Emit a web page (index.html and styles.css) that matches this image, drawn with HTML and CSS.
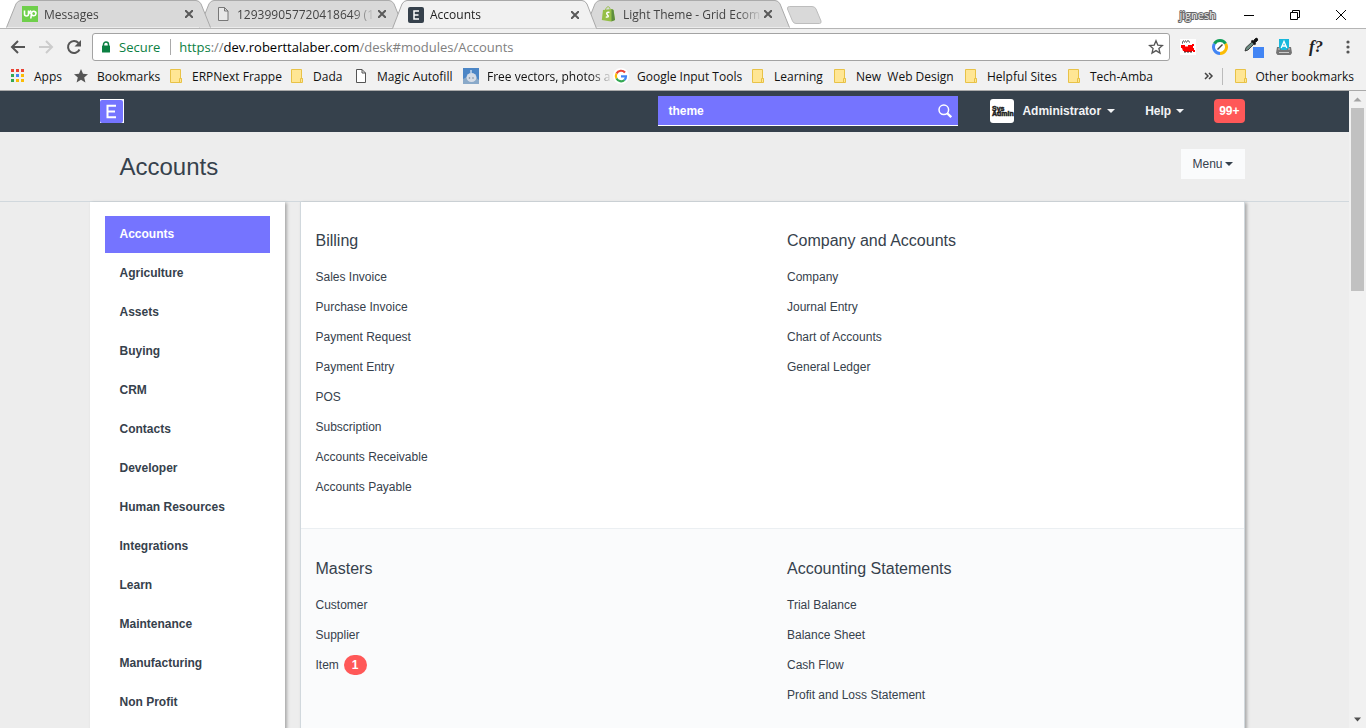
FILE: index.html
```html
<!DOCTYPE html>
<html lang="en">
<head>
<meta charset="utf-8">
<title>Accounts</title>
<link rel="stylesheet" href="styles.css">
</head>
<body>
<div class="tabstrip">
  <div class="tabs">
    <div class="tab tab-first">
      <svg class="tab-shape" viewBox="0 0 205 29" preserveAspectRatio="none"><path d="M0.500 28.500L10 4Q12 .5 15 .5H190Q193 .5 195 4L204.500 28.500"/></svg>
      <svg class="favicon" viewBox="0 0 16 16"><rect width="16" height="16" fill="#6fcf4b"/><path d="M2.500 4.500v3.500a2 2 0 0 0 4 0v-3.500M6.500 8L9 4.500M8.800 12.500l.8-5.500a2.200 2.200 0 1 1 2 2.700q-2 0-3-3" fill="none" stroke="#fff" stroke-width="1.600"/></svg>
      <span class="tab-title">Messages</span>
      <button class="tab-close" aria-label="Close Messages"><svg viewBox="0 0 8 8"><path d="M0 0L8 8M8 0L0 8"/></svg></button>
    </div>
    <div class="tab">
      <svg class="tab-shape" viewBox="0 0 205 29" preserveAspectRatio="none"><path d="M0.500 28.500L10 4Q12 .5 15 .5H190Q193 .5 195 4L204.500 28.500"/></svg>
      <svg class="favicon" viewBox="0 0 16 16"><path d="M3.500 1.500h6l3.500 3.500v9.500h-9.500zM9.500 1.500V5H13" fill="#e8e8e8" stroke="#777"/></svg>
      <span class="tab-title">129399057720418649 (1</span>
      <button class="tab-close" aria-label="Close document"><svg viewBox="0 0 8 8"><path d="M0 0L8 8M8 0L0 8"/></svg></button>
    </div>
    <div class="tab tab-active">
      <svg class="tab-shape" viewBox="0 0 205 29" preserveAspectRatio="none"><path d="M0.500 28.500L10 4Q12 .5 15 .5H190Q193 .5 195 4L204.500 28.500"/></svg>
      <svg class="favicon" viewBox="0 0 16 16"><rect width="16" height="16" rx="2" fill="#36414c"/><path d="M11 4H6v8h5M6 8h4.500" fill="none" stroke="#fff" stroke-width="1.500"/></svg>
      <span class="tab-title">Accounts</span>
      <button class="tab-close" aria-label="Close Accounts"><svg viewBox="0 0 8 8"><path d="M0 0L8 8M8 0L0 8"/></svg></button>
    </div>
    <div class="tab">
      <svg class="tab-shape" viewBox="0 0 205 29" preserveAspectRatio="none"><path d="M0.500 28.500L10 4Q12 .5 15 .5H190Q193 .5 195 4L204.500 28.500"/></svg>
      <svg class="favicon" viewBox="0 0 16 16"><path d="M2 4l9-1 1.500 1L14 14l-4 1.500L.8 14z" fill="#95bf47"/><path d="M10.500 3l2 1L14 14l-3.500 1.500z" fill="#5e8e3e"/><path d="M4.500 4C5 1.500 6.500.5 7.500.8S9 2 9 3.500" fill="none" stroke="#95bf47"/><path d="M8.500 6.500C6 5.500 5 7.500 6.300 8.700S8 11.500 4.800 11" fill="none" stroke="#fff" stroke-width="1.500"/></svg>
      <span class="tab-title">Light Theme - Grid Ecom</span>
      <button class="tab-close" aria-label="Close Light Theme"><svg viewBox="0 0 8 8"><path d="M0 0L8 8M8 0L0 8"/></svg></button>
    </div>
    <button class="new-tab" aria-label="New tab"><svg viewBox="0 0 35 18"><path d="M2.500.5H25q3 0 4 2.500L34 15q.5 2.500-1.500 2.500H9q-2.500 0-3.500-2.500L.5 3q-.5-2.500 2-2.500z" fill="#d9d9d9" stroke="#bdbdbd"/></svg></button>
  </div>
  <div class="window-controls">
    <span class="profile">jignesh</span>
    <button class="win-btn" aria-label="Minimize"><svg viewBox="0 0 12 12"><path d="M1 6.500h10"/></svg></button>
    <button class="win-btn" aria-label="Restore"><svg viewBox="0 0 12 12"><path d="M1.500 3.500h7v7h-7zM3.500 3.500v-2h7v7h-2"/></svg></button>
    <button class="win-btn" aria-label="Close window"><svg viewBox="0 0 12 12"><path d="M1 1l10 10M11 1L1 11"/></svg></button>
  </div>
</div>

<div class="toolbar">
  <button class="tool" aria-label="Back"><svg viewBox="0 0 16 16"><path d="M15 8H2M8 2L2 8l6 6" fill="none" stroke="#555" stroke-width="2"/></svg></button>
  <button class="tool" aria-label="Forward"><svg viewBox="0 0 16 16"><path d="M1 8h13M8 2l6 6-6 6" fill="none" stroke="#ccc" stroke-width="2"/></svg></button>
  <button class="tool" aria-label="Reload"><svg viewBox="0 0 16 16"><path d="M13.500 10.500A6 6 0 1 1 12.500 4" fill="none" stroke="#555" stroke-width="2"/><path d="M15 1v6.500H8.500z" fill="#555"/></svg></button>
  <div class="address">
    <svg class="lock" viewBox="0 0 10 12"><path d="M2.500 5V3.500a2.500 2.500 0 0 1 5 0V5" fill="none" stroke="#0b8043" stroke-width="1.500"/><rect x="1" y="4.500" width="8" height="7" rx=".5" fill="#0b8043"/></svg>
    <span class="secure">Secure</span>
    <span class="url"><span class="url-scheme">https</span><span class="url-rest">://</span>dev.roberttalaber.com<span class="url-rest">/desk#modules/Accounts</span></span>
    <button class="star" aria-label="Bookmark this page"><svg viewBox="0 0 16 16"><path d="M8 1.800l1.800 4.300 4.600.4-3.500 3 1.100 4.600L8 11.600l-4 2.500 1.100-4.600-3.500-3 4.600-.4z" fill="none" stroke="#555" stroke-width="1.300"/></svg></button>
  </div>
  <div class="extensions">
    <button class="ext" aria-label="Train"><svg viewBox="0 0 16 16"><rect width="16" height="16" fill="#fff"/><path d="M1 6h4v1.500h3V6h4V5h2v2h-1v2h1v2h1v2h-2v-1h-1v1H4v-1H3l-1-3H1z" fill="#f00"/><path d="M3 2h1M5 2h1M7 2h2M2 3h1M4 3h1M6 3h1M9 3h1M2 4h1M4 13h2M7 13h2M10 13h2" stroke="#333"/></svg></button>
    <button class="ext" aria-label="Compass"><svg viewBox="0 0 16 16"><circle cx="8" cy="8" r="6.500" fill="#fff"/><g fill="none" stroke-width="3"><path d="M2.400 4.800A6.500 6.500 0 0 1 13.600 4.800" stroke="#0f9d58"/><path d="M13.600 4.800A6.500 6.500 0 0 1 8 14.500" stroke="#fbbc05"/><path d="M8 14.500A6.500 6.500 0 0 1 2.400 4.800" stroke="#4285f4"/></g><path d="M5.500 10.500l5-5" stroke="#444" stroke-width="1.500"/></svg></button>
    <button class="ext ext-wide" aria-label="Colour picker"><svg viewBox="0 0 20 22"><path d="M1 15l1-3.500 6.500-6 2 2-6.500 6.500z" fill="#6c8c83" stroke="#222" stroke-width=".8"/><path d="M7.500 4.500l4 4" stroke="#111" stroke-width="1.800"/><path d="M9 5.500l2.500-3q1.500-1 2 .5t-.5 2L10.500 7z" fill="#111" stroke="#111"/><rect x="9" y="11" width="11" height="11" fill="#4285f4"/></svg></button>
    <button class="ext" aria-label="Autofill"><svg viewBox="0 0 16 16"><path d="M1 8h14l1 6-1.500 2h-13L0 14z" fill="#757575"/><path d="M2 10h2M12 10h2M3 13.500h10" stroke="#ccc"/><path d="M3 0h10v8.500l-2.500 2.500h-5L3 8.500z" fill="#18b8dc"/><path d="M5.200 9L8 2.500 10.800 9M6 7h4" fill="none" stroke="#fff" stroke-width="1.300"/></svg></button>
    <button class="ext ext-font" aria-label="What font">f?</button>
    <button class="ext" aria-label="Browser menu"><svg viewBox="0 0 16 16" fill="#555"><circle cx="8" cy="3" r="1.600"/><circle cx="8" cy="8" r="1.600"/><circle cx="8" cy="13" r="1.600"/></svg></button>
  </div>
</div>

<nav class="bookmarks" aria-label="Bookmarks">
  <a class="bm w-apps" href="#"><svg viewBox="0 0 14 14"><path d="M0 0h3v3H0zM5 0h3v3H5zM10 0h3v3h-3z" fill="#ea4335"/><path d="M0 5h3v3H0z" fill="#34a853"/><path d="M5 5h3v3H5z" fill="#4285f4"/><path d="M10 5h3v3h-3zM5 10h3v3H5zM10 10h3v3h-3z" fill="#fbbc05"/><path d="M0 10h3v3H0z" fill="#34a853"/></svg><span>Apps</span></a>
  <a class="bm w-book" href="#"><svg viewBox="0 0 14 14"><path d="M7 0l2 4.700 5 .5-3.800 3.300 1.200 5L7 10.800l-4.400 2.700 1.200-5L0 5.200l5-.5z" fill="#555"/></svg><span>Bookmarks</span></a>
  <a class="bm w-erp" href="#"><svg viewBox="0 0 14 14"><path d="M1.500.5h10v9h1v4h-11z" fill="#ffe694" stroke="#e8c247"/><path d="M10.500 13v-3.500h2" fill="none" stroke="#e8c247"/></svg><span>ERPNext Frappe</span></a>
  <a class="bm w-dada" href="#"><svg viewBox="0 0 14 14"><path d="M1.500.5h10v9h1v4h-11z" fill="#ffe694" stroke="#e8c247"/><path d="M10.500 13v-3.500h2" fill="none" stroke="#e8c247"/></svg><span>Dada</span></a>
  <a class="bm w-magic" href="#"><svg viewBox="0 0 14 14"><path d="M2.500.5h5.500l3.500 3.500v9.500h-9zM8 .5V4h3.500" fill="#fff" stroke="#555"/></svg><span>Magic Autofill</span></a>
  <a class="bm w-free" href="#"><svg viewBox="0 0 16 16"><rect width="16" height="16" fill="#4c86c6"/><path d="M0 11l4-2 3 1 4-2 5 4v4H0z" fill="#89a9c9"/><path d="M8 2v3" stroke="#fff"/><ellipse cx="8.500" cy="9.500" rx="5" ry="4.500" fill="#d5dce6"/><circle cx="6.500" cy="10" r=".8" fill="#789"/><circle cx="10" cy="10" r=".8" fill="#789"/></svg><span class="fade">Free vectors, photos a</span></a>
  <a class="bm w-google" href="#"><svg viewBox="0 0 16 16"><circle cx="8" cy="8" r="8" fill="#fff"/><g fill="none" stroke-width="2.200"><path d="M12 4.500A5.200 5.200 0 0 0 3.500 5.500" stroke="#ea4335"/><path d="M3.500 5.500a5.200 5.200 0 0 0 0 5" stroke="#fbbc05"/><path d="M3.500 10.500a5.200 5.200 0 0 0 8 1.500" stroke="#34a853"/><path d="M11.500 12A5 5 0 0 0 13 8.300H8" stroke="#4285f4"/></g></svg><span>Google Input Tools</span></a>
  <a class="bm w-learn" href="#"><svg viewBox="0 0 14 14"><path d="M1.500.5h10v9h1v4h-11z" fill="#ffe694" stroke="#e8c247"/><path d="M10.500 13v-3.500h2" fill="none" stroke="#e8c247"/></svg><span>Learning</span></a>
  <a class="bm w-web" href="#"><svg viewBox="0 0 14 14"><path d="M1.500.5h10v9h1v4h-11z" fill="#ffe694" stroke="#e8c247"/><path d="M10.500 13v-3.500h2" fill="none" stroke="#e8c247"/></svg><span>New&nbsp; Web Design</span></a>
  <a class="bm w-help" href="#"><svg viewBox="0 0 14 14"><path d="M1.500.5h10v9h1v4h-11z" fill="#ffe694" stroke="#e8c247"/><path d="M10.500 13v-3.500h2" fill="none" stroke="#e8c247"/></svg><span>Helpful Sites</span></a>
  <a class="bm" href="#"><svg viewBox="0 0 14 14"><path d="M1.500.5h10v9h1v4h-11z" fill="#ffe694" stroke="#e8c247"/><path d="M10.500 13v-3.500h2" fill="none" stroke="#e8c247"/></svg><span>Tech-Amba</span></a>
  <button class="more" aria-label="More bookmarks"><svg viewBox="0 0 10 8"><path d="M1 1l3 3-3 3M5 1l3 3-3 3" fill="none" stroke="#444" stroke-width="1.500"/></svg></button>
  <a class="bm other" href="#"><svg viewBox="0 0 14 14"><path d="M1.500.5h10v9h1v4h-11z" fill="#ffe694" stroke="#e8c247"/><path d="M10.500 13v-3.500h2" fill="none" stroke="#e8c247"/></svg><span>Other bookmarks</span></a>
</nav>

<div class="viewport">
  <div class="page">
    <header class="navbar">
      <div class="container navbar-row">
        <a class="brand" href="#" aria-label="Home"><svg viewBox="0 0 24 24"><rect width="24" height="24" fill="#fff"/><rect y="1" width="23" height="23" rx="2" fill="#7574ff"/><path d="M16 6.800H7.500v11.400H16M7.500 12.500h7.500" fill="none" stroke="#fff" stroke-width="2"/></svg></a>
        <form class="search">
          <input type="text" value="theme" aria-label="Search">
          <svg viewBox="0 0 14 14"><circle cx="5.800" cy="5.800" r="4.800" fill="none" stroke="#fff" stroke-width="1.500"/><path d="M9.200 9.200l4 4" stroke="#fff" stroke-width="2.300"/></svg>
        </form>
        <button class="nav-item user"><svg class="avatar" viewBox="0 0 24 24"><rect width="24" height="24" rx="3" fill="#fff"/><text x="2" y="12" class="avatar-text">Sys</text><text x="2" y="17" class="avatar-text">Admin</text></svg>Administrator<span class="caret"></span></button>
        <button class="nav-item help">Help<span class="caret"></span></button>
        <button class="notifications">99+</button>
      </div>
    </header>
    <div class="page-head">
      <div class="container head-row">
        <h1>Accounts</h1>
        <button class="menu-btn">Menu<span class="caret"></span></button>
      </div>
    </div>
    <div class="container body-row">
      <aside class="sidebar">
        <a class="side-link current" href="#">Accounts</a>
        <a class="side-link" href="#">Agriculture</a>
        <a class="side-link" href="#">Assets</a>
        <a class="side-link" href="#">Buying</a>
        <a class="side-link" href="#">CRM</a>
        <a class="side-link" href="#">Contacts</a>
        <a class="side-link" href="#">Developer</a>
        <a class="side-link" href="#">Human Resources</a>
        <a class="side-link" href="#">Integrations</a>
        <a class="side-link" href="#">Learn</a>
        <a class="side-link" href="#">Maintenance</a>
        <a class="side-link" href="#">Manufacturing</a>
        <a class="side-link" href="#">Non Profit</a>
      </aside>
      <main class="modules">
        <div class="section">
          <section class="group">
            <h2>Billing</h2>
            <a href="#">Sales Invoice</a>
            <a href="#">Purchase Invoice</a>
            <a href="#">Payment Request</a>
            <a href="#">Payment Entry</a>
            <a href="#">POS</a>
            <a href="#">Subscription</a>
            <a href="#">Accounts Receivable</a>
            <a href="#">Accounts Payable</a>
          </section>
          <section class="group">
            <h2>Company and Accounts</h2>
            <a href="#">Company</a>
            <a href="#">Journal Entry</a>
            <a href="#">Chart of Accounts</a>
            <a href="#">General Ledger</a>
          </section>
        </div>
        <div class="section section-alt">
          <section class="group">
            <h2>Masters</h2>
            <a href="#">Customer</a>
            <a href="#">Supplier</a>
            <a href="#">Item<span class="count">1</span></a>
          </section>
          <section class="group">
            <h2>Accounting Statements</h2>
            <a href="#">Trial Balance</a>
            <a href="#">Balance Sheet</a>
            <a href="#">Cash Flow</a>
            <a href="#">Profit and Loss Statement</a>
          </section>
        </div>
      </main>
    </div>
  </div>
  <div class="scrollbar" aria-hidden="true">
    <svg viewBox="0 0 17 17"><path d="M4.500 10.500l4-4 4 4z" fill="#a3a3a3"/></svg>
    <div class="track"><div class="thumb"></div></div>
    <svg viewBox="0 0 17 17"><path d="M5 6.500l3.500 4 3.500-4z" fill="#505050"/></svg>
  </div>
</div>
</body>
</html>
```
FILE: styles.css
```css
* { box-sizing: border-box; }

body {
  margin: 0;
  height: 100vh;
  display: flex;
  flex-direction: column;
  overflow: hidden;
  background: #ededed;
  color: #36414c;
  font-family: "Liberation Sans", Arial, sans-serif;
  font-size: 12px;
}

button {
  margin: 0;
  padding: 0;
  border: 0;
  background: none;
  color: inherit;
  font: inherit;
}

a { color: inherit; text-decoration: none; }
svg { display: block; flex: none; }

.tabstrip, .toolbar, .bookmarks {
  font-family: "Open Sans", "Noto Sans", sans-serif;
  flex: none;
  display: flex;
  align-items: center;
}

/* Tab strip */
.tabstrip {
  height: 29px;
  justify-content: space-between;
  background: linear-gradient(#b5b5b5, #b5b5b5) bottom / 100% 1px no-repeat #fff;
}
.tabs { display: flex; padding-left: 6px; }
.tab {
  position: relative;
  z-index: 0;
  display: flex;
  align-items: center;
  width: 205px;
  height: 29px;
  padding: 0 18px 0 16px;
  margin-right: -12px;
  color: #444;
}
.tab-first { z-index: 1; }
.tab-active { z-index: 2; color: #222; }
.tab-shape {
  position: absolute;
  inset: 0;
  z-index: -1;
  width: 100%;
  height: 100%;
  fill: #d9d9d9;
  stroke: #a8a8a8;
}
.tab:not(.tab-active) { border-bottom: 1px solid #b5b5b5; }
.tab-active .tab-shape { fill: #f1f1f1; }
.favicon { width: 16px; height: 16px; }
.tab-title {
  flex: 1;
  margin: 0 2px 0 6px;
  overflow: hidden;
  white-space: nowrap;
  -webkit-mask-image: linear-gradient(to left, transparent, #000 24px);
  mask-image: linear-gradient(to left, transparent, #000 24px);
}
.tab-close svg { width: 8px; height: 8px; stroke: #5a5a5a; stroke-width: 2; }
.new-tab { margin: 0 0 0 9px; }
.new-tab svg { width: 35px; height: 18px; }
.window-controls { display: flex; align-items: center; padding-right: 2px; }
.profile {
  margin-right: 10px;
  color: #eee;
  font-size: 11px;
  -webkit-text-stroke: 2px #666;
  paint-order: stroke;
}
.win-btn { width: 46px; display: flex; justify-content: center; }
.win-btn svg { width: 12px; height: 12px; fill: none; stroke: #000; }

/* Toolbar */
.toolbar { height: 35px; padding: 0 10px 0 4px; background: #f1f1f1; }
.tool { width: 28px; display: flex; justify-content: center; }
.tool svg { width: 16px; height: 16px; }
.address {
  flex: 1;
  display: flex;
  align-items: center;
  height: 28px;
  margin: 0 10px 0 4px;
  padding: 0 5px 0 8px;
  border: 1px solid #a3a3a3;
  border-radius: 3px;
  background: #fff;
  font-size: 13px;
}
.lock { width: 10px; height: 12px; }
.secure {
  margin-left: 8px;
  padding-right: 10px;
  border-right: 1px solid #aaa;
  line-height: 16px;
  color: #0b8043;
}
.url { flex: 1; margin-left: 8px; color: #000; }
.url-scheme { color: #0b8043; }
.url-rest { color: #808080; }
.star svg { width: 16px; height: 16px; }
.extensions { display: flex; gap: 16px; align-items: center; }
.ext { width: 16px; }
.ext svg { width: 16px; height: 16px; }
.ext-wide svg { width: 20px; height: 22px; }
.ext-font { font: italic bold 17px "Liberation Serif", serif; color: #222; }

/* Bookmarks bar */
.bookmarks {
  height: 27px;
  padding: 0 12px 2px 10px;
  border-bottom: 1px solid #aaa;
  background: #f1f1f1;
  color: #111;
}
.bm { display: flex; align-items: center; gap: 8px; white-space: nowrap; }
.bm svg { width: 16px; height: 14px; }
.w-apps { width: 63px; }
.w-book { width: 95px; }
.w-erp { width: 121px; }
.w-dada { width: 64px; }
.w-magic { width: 110px; }
.w-free { width: 150px; }
.w-google { width: 137px; }
.w-learn { width: 82px; }
.w-web { width: 131px; }
.w-help { width: 103px; }
.w-free svg, .w-google svg { height: 16px; }
.fade {
  width: 126px;
  flex: none;
  -webkit-mask-image: linear-gradient(to left, transparent, #000 22px);
  mask-image: linear-gradient(to left, transparent, #000 22px);
}
.more { margin-left: auto; padding-right: 8px; }
.more svg { width: 10px; height: 8px; }
.other { border-left: 1px solid #bbb; gap: 6px; padding-left: 10px; }

/* Page */
.viewport { flex: 1; min-height: 0; display: flex; }
.page { flex: 1; overflow-y: auto; scrollbar-width: none; }
.container { max-width: 1170px; margin: 0 auto; }
.navbar { background: #36414c; color: #fff; }
.navbar-row { display: flex; align-items: center; height: 41px; padding: 0 15px 2px 10px; }
.brand svg { width: 24px; height: 24px; }
.search {
  display: flex;
  align-items: center;
  width: 300px;
  height: 30px;
  margin: 0 32px 0 auto;
  padding: 1px 6px 0 10px;
  border-bottom: 1px solid #fff;
  background: #7574ff;
}
.search input {
  flex: 1;
  padding: 0;
  border: 0;
  outline: 0;
  background: none;
  color: #fff;
  font: bold 12px "Liberation Sans", Arial, sans-serif;
}
.search svg { width: 14px; height: 14px; }
.nav-item { display: flex; align-items: center; font-weight: bold; color: #f2f3f5; }
.avatar { width: 24px; height: 24px; margin-right: 8px; }
.avatar-text { font: bold 7px "Liberation Sans", Arial, sans-serif; fill: #222; stroke: #222; stroke-width: 0.5; }
.caret {
  display: inline-block;
  margin-left: 6px;
  border: 4px solid transparent;
  border-top-color: currentColor;
  border-bottom: 0;
}
.help { margin: 0 30px; }
.help .caret { margin-left: 5px; }
.notifications {
  height: 24px;
  padding: 0 5px;
  border-radius: 4px;
  background: #ff5858;
  color: #fff;
  font-weight: bold;
}
.page-head { border-bottom: 1px solid #d1d8dd; }
.head-row {
  display: flex;
  align-items: center;
  justify-content: space-between;
  height: 69px;
  padding: 0 15px 0 30px;
}
h1 { margin: 0; font-size: 24px; font-weight: normal; }
.menu-btn {
  display: flex;
  align-items: center;
  height: 30px;
  margin-bottom: 6px;
  padding: 0 12px 0 11px;
  background: #fafbfc;
}
.menu-btn .caret { margin-left: 2px; }

.body-row { display: flex; gap: 15px; padding-right: 15px; }
.sidebar {
  display: flex;
  flex-direction: column;
  gap: 2px;
  width: 195px;
  padding: 14px 15px;
  background: #fff;
  box-shadow: 2px 1px 3px #aaa;
}
.side-link { padding: 0 15px; line-height: 37px; font-weight: bold; }
.side-link.current { background: #7574ff; color: #fff; }
.modules {
  flex: 1;
  border: 1px solid #d1d8dd;
  border-top: 0;
  background: #fff;
  box-shadow: 2px 1px 3px #aaa;
}
.section { display: flex; padding: 29px 0 26px; }
.section-alt { padding-top: 30px; border-top: 1px solid #ebeff2; background: #fafbfc; }
.group { flex: 1; display: flex; flex-direction: column; padding: 0 15px; }
h2 { margin: 0 0 11px; font-size: 16px; line-height: 20px; font-weight: normal; }
.group a { line-height: 30px; }
.count {
  display: inline-block;
  margin-left: 5px;
  padding: 0 8px;
  border-radius: 10px;
  background: #ff5858;
  color: #fff;
  font-weight: bold;
  line-height: 20px;
}

/* Scrollbar */
.scrollbar { display: flex; flex-direction: column; width: 17px; background: #f1f1f1; }
.scrollbar svg { width: 17px; height: 17px; }
.track { flex: 1; padding: 0 2px; }
.thumb { height: 183px; background: #c1c1c1; }
```
